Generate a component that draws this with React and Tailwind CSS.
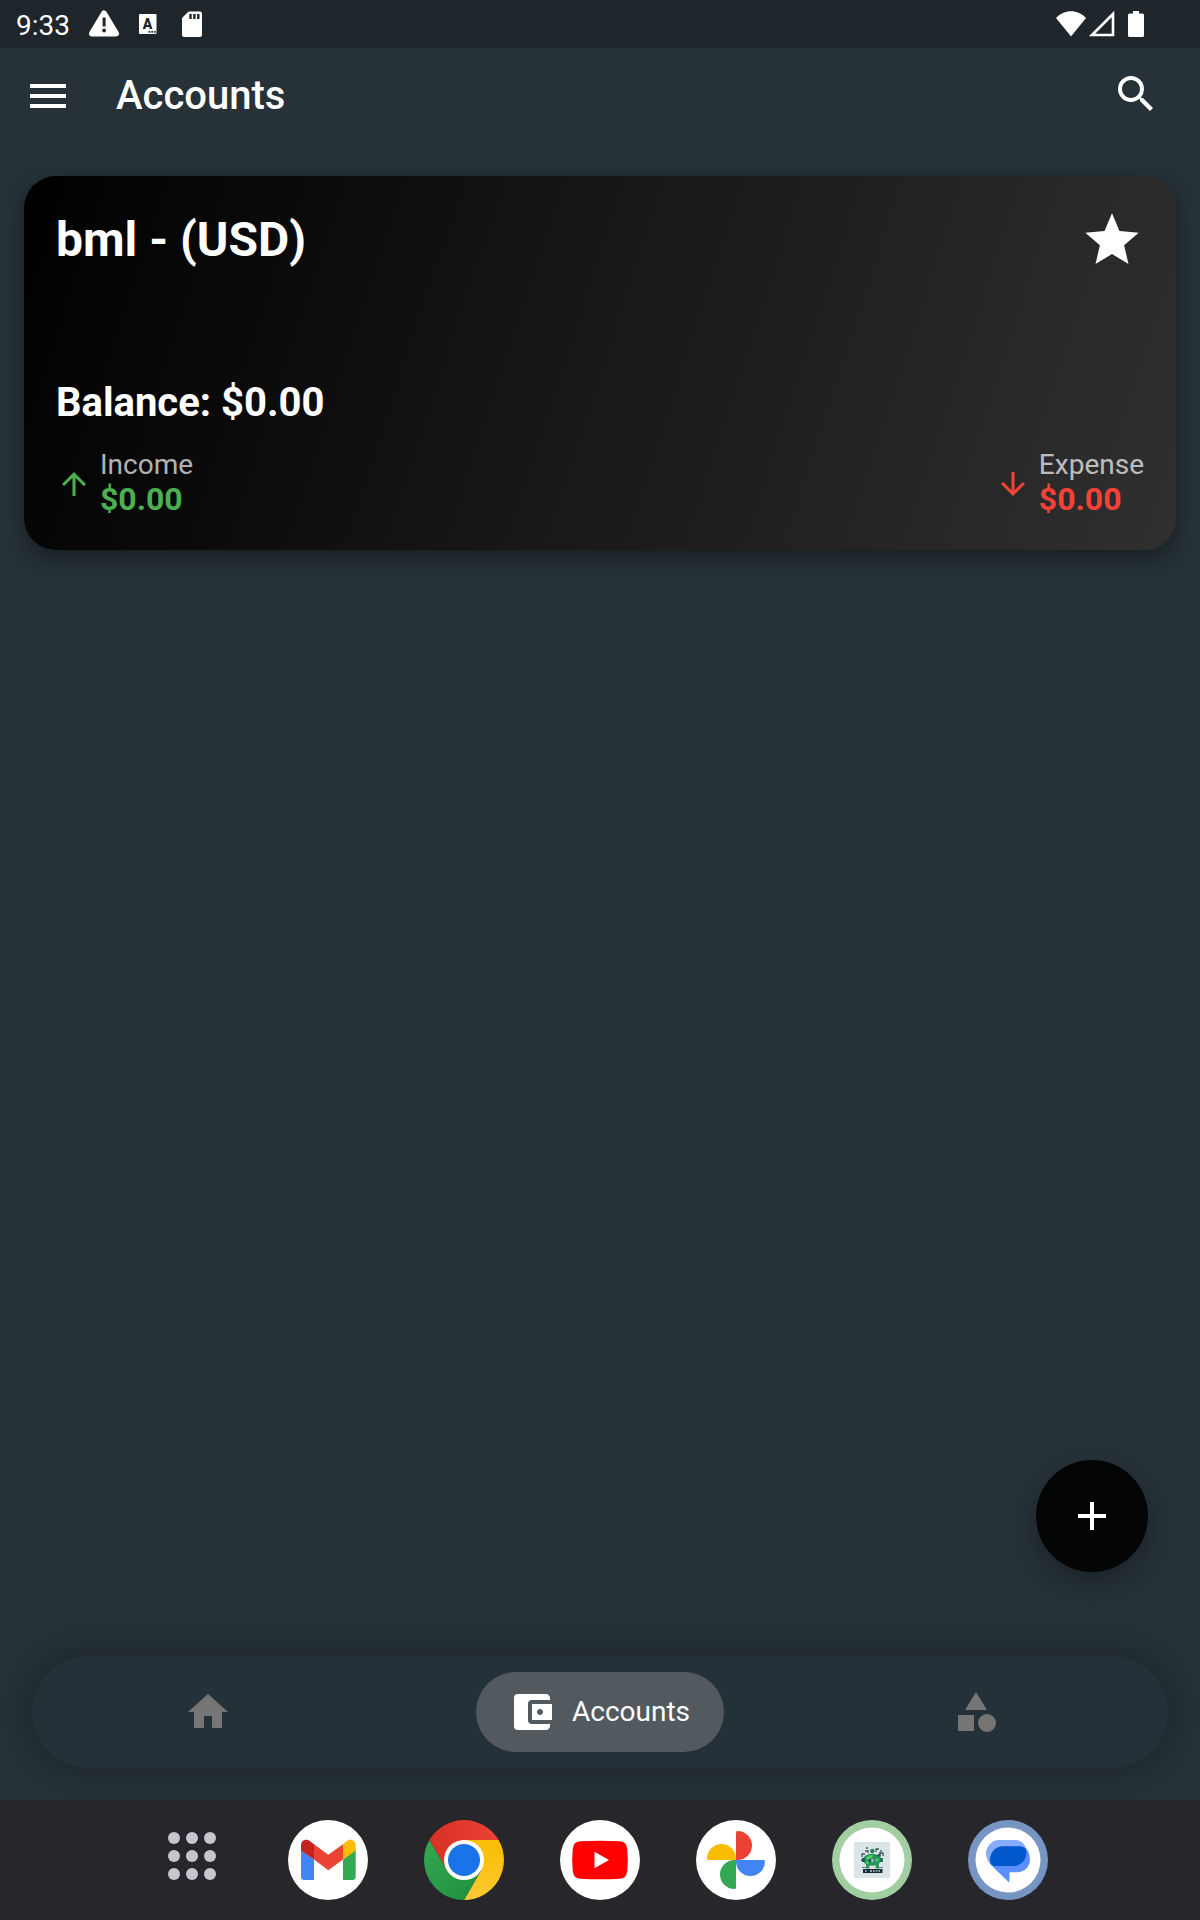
import React from "react";
import {
  MdMenu,
  MdSearch,
  MdStar,
  MdArrowUpward,
  MdArrowDownward,
  MdAdd,
  MdHome,
  MdAccountBalanceWallet,
  MdCategory,
} from "react-icons/md";

function StatusBar() {
  return (
    <div className="flex h-12 items-center justify-between bg-[#1e262b] pl-4 pr-14 text-white">
      <div className="flex items-center">
        <span className="mt-1 w-[72px] text-[28px] leading-8">9:33</span>
        <svg width="32" height="30" viewBox="0 0 32 30" role="img" aria-label="Warning">
          <path d="M16 4.500 28 24.500H4z" fill="white" stroke="white" strokeWidth="6" strokeLinejoin="round" />
          <path d="M14.600 8.500h3v9h-3z" fill="#1e262b" />
          <circle cx="16.100" cy="21.500" r="1.900" fill="#1e262b" />
        </svg>
        <svg className="ml-4" width="24" height="24" viewBox="0 0 24 24" role="img" aria-label="Keyboard">
          <path fill="white" d="M4 2h15.500a1 1 0 0 1 1 1V21a1 1 0 0 1-1 1H4a1 1 0 0 1-1-1V3a1 1 0 0 1 1-1z" />
          <text x="11.500" y="16.500" textAnchor="middle" fontFamily="Roboto, sans-serif" fontSize="14" fontWeight="900" fill="#1e262b">A</text>
          <path d="M12.500 19h1.700v1.700h-1.700zM15.300 19H17v1.700h-1.700zM18.100 19h1.700v1.700h-1.700z" fill="#1e262b" />
        </svg>
        <svg className="ml-5" width="24" height="28" viewBox="0 0 24 28" role="img" aria-label="Storage card">
          <path fill="white" d="M8.500 1.500H20a2 2 0 0 1 2 2V25a2 2 0 0 1-2 2H4a2 2 0 0 1-2-2V8z" />
          <path fill="#1e262b" d="M9.300 4h2.400v5H9.300zM13.200 4h2.400v5h-2.400zM17.100 4h2.400v5h-2.400z" />
        </svg>
      </div>
      <div className="flex items-center">
        <svg width="30" height="26" viewBox="0 0 30 26" role="img" aria-label="Wi-Fi">
          <path fill="white" d="M15 25.500 0 7C8-2 22-2 30 7z" />
        </svg>
        <svg className="ml-[2px]" width="28" height="28" viewBox="0 0 28 28" role="img" aria-label="Signal">
          <path d="M4 25 25 4V25z" fill="none" stroke="white" strokeWidth="2.600" />
        </svg>
        <svg className="ml-3" width="16" height="26" viewBox="0 0 16 26" role="img" aria-label="Battery">
          <path fill="white" d="M5 0h6v2.500h3.500A1.500 1.500 0 0 1 16 4v20.500a1.500 1.500 0 0 1-1.500 1.500h-13A1.500 1.500 0 0 1 0 24.500V4a1.500 1.500 0 0 1 1.500-1.500H5z" />
        </svg>
      </div>
    </div>
  );
}

function AppBar() {
  return (
    <header className="flex h-24 items-center pl-6 pr-10 text-white">
      <button aria-label="Open menu">
        <MdMenu size={48} />
      </button>
      <h1 className="ml-11 flex-1 text-[40px] font-medium leading-[48px]">Accounts</h1>
      <button aria-label="Search" className="pb-1">
        <MdSearch size={48} />
      </button>
    </header>
  );
}

function Flow({ icon: Icon, label, amount, color }) {
  return (
    <div className="flex items-center gap-2">
      <Icon size={36} className={color} />
      <div>
        <p className="text-[28px] leading-[30px] text-white/70">{label}</p>
        <p className={`text-[32px] font-bold leading-[38px] ${color}`}>{amount}</p>
      </div>
    </div>
  );
}

function AccountCard() {
  return (
    <section className="mx-6 mt-8 rounded-[32px] bg-[linear-gradient(108deg,#000000,#303030)] p-8 text-white shadow-[0_8px_20px_rgba(0,0,0,0.4)]">
      <div className="flex h-16 items-center justify-between">
        <h2 className="text-5xl font-bold">bml - (USD)</h2>
        <button aria-label="Favourite account">
          <MdStar size={64} />
        </button>
      </div>
      <p className="mt-[108px] text-[40px] font-bold leading-[46px]">Balance: $0.00</p>
      <div className="mt-6 flex justify-between">
        <Flow icon={MdArrowUpward} label="Income" amount="$0.00" color="text-[#4caf50]" />
        <Flow icon={MdArrowDownward} label="Expense" amount="$0.00" color="text-[#f44336]" />
      </div>
    </section>
  );
}

function BottomNav() {
  return (
    <nav className="mx-8 mb-8 flex h-28 items-center justify-between rounded-full bg-[#253138] px-[10%] shadow-[0_0_32px_rgba(0,0,0,0.32)]">
      <a href="#home" aria-label="Home" className="py-4 pl-8 pr-12 text-[#757575]">
        <MdHome size={48} />
      </a>
      <a
        href="#accounts"
        aria-current="page"
        className="flex h-20 items-center gap-4 rounded-full bg-[#52595f] pl-8 pr-[34px] text-white"
      >
        <MdAccountBalanceWallet size={48} />
        <span className="text-[28px] leading-[34px]">Accounts</span>
      </a>
      <a href="#categories" aria-label="Categories" className="py-4 pl-8 pr-12 text-[#757575]">
        <MdCategory size={48} />
      </a>
    </nav>
  );
}

function AllApps() {
  return (
    <svg className="h-20 w-20 pb-2" viewBox="-16 -12 80 72" aria-hidden="true">
      <g fill="#c8c5d0">
        {[6, 24, 42].map((y) => [6, 24, 42].map((x) => <circle key={`${x}-${y}`} cx={x} cy={y} r="6" />))}
      </g>
    </svg>
  );
}

function Gmail() {
  return (
    <svg className="h-20 w-20" viewBox="0 0 80 80" aria-hidden="true">
      <circle cx="40" cy="40" r="40" fill="white" />
      <path d="M13 30 26 39.500V60H16.500A3.500 3.500 0 0 1 13 56.500z" fill="#4285f4" />
      <path d="M55 39.500 67.700 30V56.500A3.500 3.500 0 0 1 64.200 60H55z" fill="#34a853" />
      <path d="M26 24.300 40.300 34.700 55 24.300V39.500L40.300 50.300 26 39.500z" fill="#ea4335" />
      <path d="M13 30.500V25.500C13 20 18.500 18 22.500 21.500L26 24.300V39.500z" fill="#c5221f" />
      <path d="M67.700 30.500V25.500C67.700 20 62.200 18 58.200 21.500L55 24.300V39.500z" fill="#fbbc04" />
    </svg>
  );
}

function Chrome() {
  return (
    <svg className="h-20 w-20" viewBox="0 0 80 80" aria-hidden="true">
      <defs>
        <linearGradient id="chrome-red" x1="0" x2="1">
          <stop offset="0" stopColor="#d93025" />
          <stop offset="1" stopColor="#ea4335" />
        </linearGradient>
        <linearGradient id="chrome-yellow" x1="0.400" y1="1" x2="0.600" y2="0">
          <stop offset="0" stopColor="#fcc934" />
          <stop offset="1" stopColor="#fbbc04" />
        </linearGradient>
        <linearGradient id="chrome-green" x1="1" y1="1" x2="0" y2="0">
          <stop offset="0" stopColor="#1e8e3e" />
          <stop offset="1" stopColor="#34a853" />
        </linearGradient>
      </defs>
      <path d="M40 40 22.700 50 5.400 20A40 40 0 0 1 74.600 20H40z" fill="url(#chrome-red)" />
      <path d="M40 20H74.600A40 40 0 0 1 40 80L57.300 50 40 40z" fill="url(#chrome-yellow)" />
      <path d="M5.400 20 22.700 50 40 40 57.300 50 40 80A40 40 0 0 1 5.400 20z" fill="url(#chrome-green)" />
      <circle cx="40" cy="40" r="20" fill="white" />
      <circle cx="40" cy="40" r="16" fill="#1a73e8" />
    </svg>
  );
}

function YouTube() {
  return (
    <svg className="h-20 w-20" viewBox="0 0 80 80" aria-hidden="true">
      <circle cx="40" cy="40" r="40" fill="white" />
      <path d="M20 21.300Q40 20 60 21.300 66.500 21.800 67.200 28.500 68.500 40 67.200 51.500 66.500 58.200 60 58.700 40 60 20 58.700 13.500 58.200 12.800 51.500 11.500 40 12.800 28.500 13.500 21.800 20 21.300z" fill="#ff0000" />
      <path d="M34.500 31.800 49 40 34.500 48.200z" fill="white" />
    </svg>
  );
}

function Photos() {
  return (
    <svg className="h-20 w-20" viewBox="0 0 80 80" aria-hidden="true">
      <circle cx="40" cy="40" r="40" fill="white" />
      <path d="M40 40V12.500Q40 11 41.500 11A14.500 14.500 0 0 1 41.500 40z" fill="#ea4335" />
      <path d="M40 40H67.500Q69 40 69 41.500A14.500 14.500 0 0 1 40 41.500z" fill="#4285f4" />
      <path d="M40 40V67.500Q40 69 38.500 69A14.500 14.500 0 0 1 38.500 40z" fill="#34a853" />
      <path d="M40 40H12.500Q11 40 11 38.500A14.500 14.500 0 0 1 40 38.500z" fill="#fbbc04" />
    </svg>
  );
}

function PiggyBank() {
  return (
    <svg className="h-20 w-20" viewBox="0 0 80 80" aria-hidden="true">
      <circle cx="40" cy="40" r="40" fill="#a1cfa1" />
      <circle cx="40" cy="40" r="32.500" fill="white" />
      <path d="M22 22h36v36H22z" fill="#dbe5e7" />
      <path
        d="M30 37v-3h3M33 31h3M36 33v-3M44 32v-3h3M47 33h4v3M49 30v2M34 28h2M30 40h-1"
        fill="none"
        stroke="#3c5964"
        strokeWidth="1.300"
      />
      <path d="M34 43h3.500v5.500H34zM43.500 43H47v5.500h-3.500z" fill="#2e9c56" />
      <ellipse cx="40" cy="39.800" rx="9.200" ry="6" fill="#24945a" />
      <path d="M44 35.500 49 33l-.5 4zM30 38h3v4h-3z" fill="#1c5c50" />
      <path d="M48 38h2.800v4H48z" fill="#1f6b54" />
      <path d="M34 37.500Q37 34.500 41 35l-1 3-5 2z" fill="#4fce63" />
      <path d="M44 38.500l3 .5-1.500 3-2.500-1zM33.500 41l3 .5v2.500h-2z" fill="#45cf6e" />
      <path d="M36.500 40l2-1.500 1 2.500-2 1.500z" fill="#14564a" />
      <path d="M39.300 38.800h2.200v3.400h-2.200z" fill="#a8b6c4" />
      <circle cx="40.300" cy="31" r="2.200" fill="#287c58" />
      <path d="M30 47h4v.8h-4zM47 47h4v.8h-4z" fill="#3c5964" />
      <path d="M31 49h19.500v4H31z" fill="#172c35" />
      <path d="M33 50.200h1.500v1.500H33zM38 50.200h2v1.500h-2zM41 50.200h1.500v1.500H41zM43.500 50.200h2v1.200h-2zM46.500 50.200h1.500v1.500h-1.500z" fill="#c3ced3" />
    </svg>
  );
}

function Messages() {
  return (
    <svg className="h-20 w-20" viewBox="0 0 80 80" aria-hidden="true">
      <circle cx="40" cy="40" r="40" fill="#7795c3" />
      <circle cx="40" cy="40" r="32.500" fill="white" />
      <path d="M32 20.500H47Q54 20.500 58 28L60 31Q62 35 62 39.500A12.800 12.800 0 0 1 49.200 52.300H41.500V61Q41.500 63 40 61.500L23.500 45.500Q18.500 40 18.500 34A13.500 13.500 0 0 1 32 20.500z" fill="#5c8fff" />
      <path d="M31 20H47.500Q54 20 58 28L40 35 23 44Q18.200 39 18.200 33A13 13 0 0 1 31 20z" fill="#86acff" />
      <path d="M35 26.300H52Q58.300 26.300 58.300 32.500C58.300 40 53 46 45 46H28Q22 46 22 40C22 32 28 26.300 35 26.300z" fill="#0057cc" />
    </svg>
  );
}

const dockApps = [
  { label: "All apps", Icon: AllApps },
  { label: "Gmail", Icon: Gmail },
  { label: "Chrome", Icon: Chrome },
  { label: "YouTube", Icon: YouTube },
  { label: "Photos", Icon: Photos },
  { label: "Expense tracker", Icon: PiggyBank },
  { label: "Messages", Icon: Messages },
];

function Dock() {
  return (
    <footer className="flex h-[120px] items-center justify-center gap-14 bg-[#27262b]">
      {dockApps.map(({ label, Icon }) => (
        <button key={label} aria-label={label}>
          <Icon />
        </button>
      ))}
    </footer>
  );
}

export default function App() {
  return (
    <div className="flex min-h-screen flex-col bg-[#263238] font-[Roboto,sans-serif]">
      <StatusBar />
      <AppBar />
      <main className="flex flex-1 flex-col justify-between">
        <AccountCard />
        <button
          aria-label="Add account"
          className="mb-[84px] mr-[52px] flex h-28 w-28 items-center justify-center self-end rounded-full bg-[#040606] text-white shadow-[0_10px_24px_rgba(0,0,0,0.3)]"
        >
          <MdAdd size={48} />
        </button>
      </main>
      <BottomNav />
      <Dock />
    </div>
  );
}
